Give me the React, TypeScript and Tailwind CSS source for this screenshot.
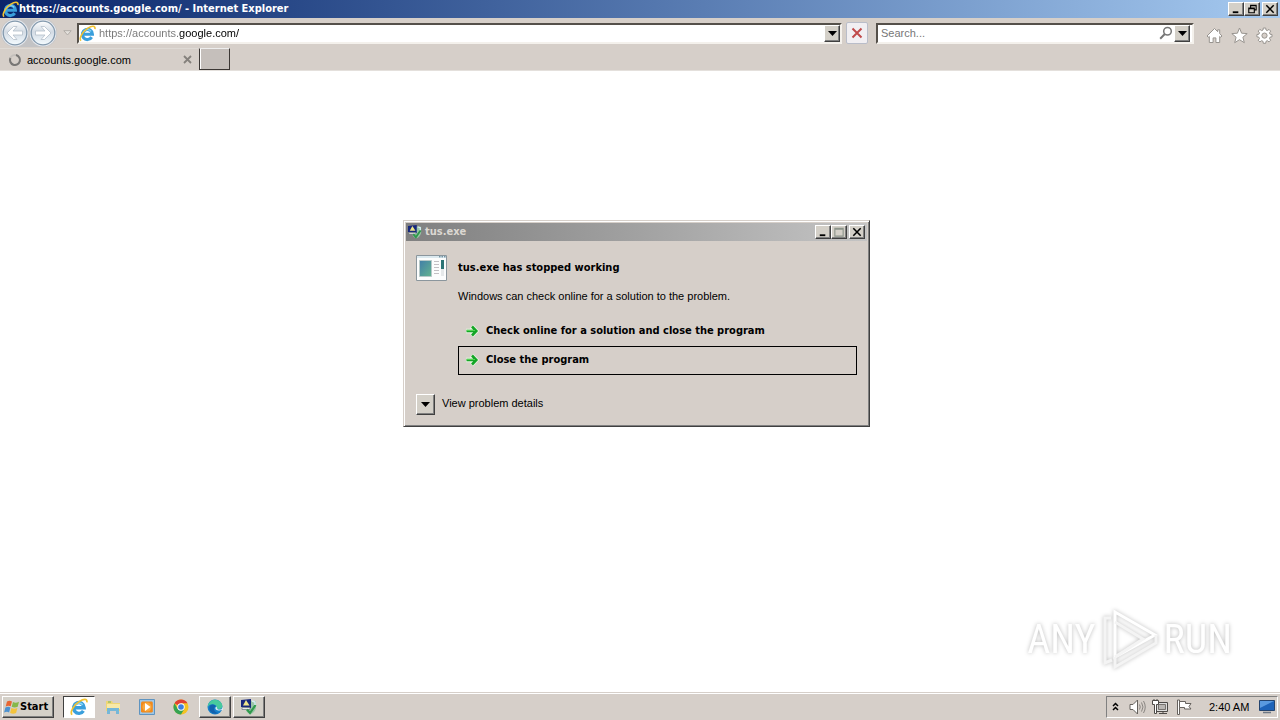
import React from 'react';
import clsx from 'clsx';

const raised = 'border border-t-white border-l-white border-r-[#404040] border-b-[#404040] bg-[#d4d0c8] shadow-[inset_-1px_-1px_0_#808080]';
const sunken = 'border-2 border-t-[#55504a] border-l-[#55504a] border-r-[#f4f1ec] border-b-[#f4f1ec] bg-white';

const IeLogo = ({ className }: { className: string }) => (
  <svg viewBox="0 0 16 16" className={className} aria-hidden="true">
    <path d="M3.6 8.7H12.6A4.7 4.8 0 1 0 11.9 11.4" fill="none" stroke="#3a9fdc" strokeWidth="3" />
    <path d="M4.3 6.600A4.2 4 0 0 1 11.4 6" fill="none" stroke="#8ad6f6" strokeWidth="1.2" />
    <path d="M1.8 14.9C-.3 12.5 3.3 6.2 8.4 3C12 .6 15.5.3 15 3.8" fill="none" stroke="#f2c230" strokeWidth="1.5" />
  </svg>
);

const ProgramIcon = ({ className }: { className: string }) => (
  <svg viewBox="0 0 16 16" className={className} aria-hidden="true">
    <path d="M9 2h6v7c-1 4-4 6-6 6-3-1-4-3-4-5l4-1z" fill="#9bc4a8" />
    <path d="M0 1 10 0v9L0 8z" fill="#16277c" />
    <path d="M2 6.500 5 1l3.500 5.500z" fill="#efe58a" />
    <path d="M1 8.500h8v2H1z" fill="#e9e9e9" stroke="#56636b" strokeWidth=".6" />
    <path d="m6 10.500 3 3.500 5.500-8" fill="none" stroke="#2f9a4c" strokeWidth="2.200" />
    <path d="m11 2 3 1v3" fill="none" stroke="#d7edf5" strokeWidth="1.400" />
  </svg>
);

const DownArrow = () => (
  <svg viewBox="0 0 9 5" className="h-[5px] w-[9px]" aria-hidden="true">
    <path d="M0 0h9L4.5 5z" fill="#000" />
  </svg>
);

const captionPaths = {
  Minimize: <path d="M3 9h6v2H3z" fill="#000" />,
  Restore: <path d="M5 2.5h6v5H9M5 3h6M5 2v3M3 5.5h6v5H3zM3 6.2h6" fill="none" stroke="#000" strokeWidth="1.2" />,
  Maximize: <path d="M2 2.500h9v8.500H2zM2 3.500h9" fill="none" stroke="#8c948a" strokeWidth="1.200" />,
  Close: <path d="m2.500 2.500 8 8m0-8-8 8" fill="none" stroke="#000" strokeWidth="1.7" />,
};

const CaptionButton = ({ kind }: { kind: keyof typeof captionPaths }) => (
  <button aria-label={kind} className={clsx(raised, 'flex h-[14px] w-4 items-center justify-center', kind === 'Close' && 'ml-0.5')}>
    <svg viewBox="0 0 13 13" className="size-3">{captionPaths[kind]}</svg>
  </button>
);

const NavButton = ({ label, flip }: { label: string; flip?: boolean }) => (
  <button aria-label={label} className="size-7">
    <svg viewBox="0 0 28 28" className={clsx('size-7', flip && '-scale-x-100')}>
      <defs>
        <linearGradient id={label} x1="0" y1="0" x2="0" y2="1">
          <stop offset="0" stopColor="#fff" />
          <stop offset=".45" stopColor="#d3dbe4" />
          <stop offset="1" stopColor="#f4fbff" />
        </linearGradient>
      </defs>
      <circle cx="14" cy="14" r="13.4" fill="#e6e9ee" />
      <circle cx="14" cy="14" r="11.8" fill={`url(#${label})`} stroke="#8399ad" strokeWidth="1.3" />
      <path d="M6 14l6.500-6.500h3.500l-4 4.500h9.500v4H12l4 4.500h-3.500z" fill="#fff" stroke="#b4bfca" strokeWidth=".8" />
    </svg>
  </button>
);

function Browser() {
  return (
    <>
      <header className="flex h-[18px] items-center bg-linear-to-r from-[#0a246a] to-[#a6caf0] px-0.5">
        <IeLogo className="size-[17px]" />
        <h1 className="grow font-['DejaVu_Sans_Condensed',sans-serif] font-bold text-white">https://accounts.google.com/ - Internet Explorer</h1>
        <CaptionButton kind="Minimize" />
        <CaptionButton kind="Restore" />
        <CaptionButton kind="Close" />
      </header>

      <nav className="flex h-[30px] items-center pr-[7px] pl-px">
        <div className="flex rounded-full bg-[#c3c3c5]">
          <NavButton label="Back" />
          <NavButton label="Forward" flip />
        </div>
        <button aria-label="Recent pages" className="flex w-5 justify-center">
          <svg viewBox="0 0 9 6" className="h-1.5 w-[9px]"><path d="M.8.7h7.400L4.500 5z" fill="#e4e1dc" stroke="#b1ada8" /></svg>
        </button>
        <div className={clsx(sunken, 'flex h-[21px] grow items-center')}>
          <IeLogo className="size-[17px]" />
          <input
            aria-label="Address"
            defaultValue="https://accounts.google.com/"
            className="ml-[3px] min-w-0 grow bg-linear-to-r from-[#777] from-[80px] via-[#000] via-[80px] to-[#000] bg-clip-text text-transparent outline-none"
          />
          <button aria-label="Show address list" className={clsx(raised, 'flex h-[17px] w-4 items-center justify-center')}><DownArrow /></button>
        </div>
        <button aria-label="Stop" className="mx-1 flex size-[22px] items-center justify-center rounded-xs border border-[#b9bdc9] bg-[#f1eff2]">
          <svg viewBox="0 0 12 12" className="size-3"><path d="m1.500 1.500 9 9m0-9-9 9" stroke="#c04a4a" strokeWidth="2" /></svg>
        </button>
        <div className={clsx(sunken, 'ml-1 flex h-[21px] w-[318px] items-center pr-0.5')}>
          <input aria-label="Search" placeholder="Search..." className="ml-[3px] min-w-0 grow outline-none placeholder:text-[#777]" />
          <button aria-label="Search" className="mr-px">
            <svg viewBox="0 0 14 14" className="size-3.5"><circle cx="8.5" cy="5.3" r="3.800" fill="none" stroke="#777" strokeWidth="1.500" /><path d="m5.800 8-4.600 4.700" stroke="#777" strokeWidth="2" /></svg>
          </button>
          <button aria-label="Search options" className={clsx(raised, 'flex h-[17px] w-4 items-center justify-center')}><DownArrow /></button>
        </div>
        <div className="ml-3 flex items-center gap-2 pt-1">
          <button aria-label="Home">
            <svg viewBox="0 0 17 17" className="size-[17px]"><path d="M8.500 1.500 1 9l1.300 1.300 1-.9v6.100h3.800v-4.600h2.800v4.600h3.800V9.400l1 .9L16 9l-2.300-2.400V2.800h-2v1.900z" fill="#fff" stroke="#98948f" /></svg>
          </button>
          <button aria-label="Favorites">
            <svg viewBox="0 0 17 17" className="size-[17px]"><path d="m8.500 1 2.100 5.200 5.600.4-4.300 3.600 1.400 5.500-4.800-3-4.800 3 1.400-5.500L.8 6.600l5.600-.4z" fill="#fff" stroke="#98948f" /></svg>
          </button>
          <button aria-label="Tools">
            <svg viewBox="0 0 17 17" className="size-[17px]">
              <path d="m7.300 1h2.400l.3 2 1.300.6 1.700-1.200 1.700 1.700-1.200 1.700.5 1.400 2 .3v2.300l-2 .4-.5 1.300 1.200 1.700-1.700 1.700-1.700-1.200-1.300.6-.3 2H7.300l-.3-2-1.400-.6-1.700 1.200-1.700-1.700 1.300-1.700-.6-1.300-2-.4V7.500l2-.3.600-1.400-1.300-1.700 1.700-1.700 1.700 1.200L7 3z" fill="#fff" stroke="#98948f" />
              <circle cx="8.500" cy="8.600" r="2.600" fill="#d6cfc9" stroke="#98948f" />
            </svg>
          </button>
        </div>
      </nav>

      <div className="flex h-[23px] border-b border-[#e4e0dc]" role="tablist">
        <div role="tab" aria-selected="true" className="mr-px flex w-[198px] items-center border-t border-[#dedad5] pl-2">
          <svg viewBox="0 0 14 14" className="size-3.5" aria-hidden="true"><circle cx="7" cy="7" r="5" fill="none" stroke="#c4c0bc" strokeWidth="2" /><path d="M8 2.100A5 5 0 1 1 2.400 5" fill="none" stroke="#797775" strokeWidth="2" /></svg>
          <span className="ml-[5px] grow">accounts.google.com</span>
          <button aria-label="Close tab" className="mr-1.5"><svg viewBox="0 0 9 9" className="size-[9px]"><path d="m1 1 7 7m0-7L1 8" stroke="#85817c" strokeWidth="1.800" /></svg></button>
        </div>
        <button aria-label="New tab" className="w-[31px] border border-t-[#eee] border-r-[#3b3734] border-b-[#3b3734] border-l-[#3b3734] bg-[#c5bfbb] shadow-[inset_1px_0_0_#fff]" />
      </div>
    </>
  );
}

const GreenArrow = () => (
  <svg viewBox="0 0 16 16" className="size-4 shrink-0" aria-hidden="true">
    <path d="M2 8h10M7.500 3.500 12 8l-4.500 4.500" fill="none" stroke="#e9f5e2" strokeWidth="4.600" />
    <path d="M2.500 8h10M8 3.500 12.300 8 8 12.500" fill="none" stroke="#14a526" strokeWidth="2.600" />
    <path d="M3 7.500h8" stroke="#52d552" />
  </svg>
);

function CrashDialog() {
  return (
    <section
      role="dialog"
      aria-labelledby="dialog-title"
      className="absolute top-[220px] left-[403px] w-[467px] border border-t-[#d6cfc9] border-r-[#404040] border-b-[#404040] border-l-[#d6cfc9] bg-[#d6cfc9] p-0.5 pb-[11px] shadow-[inset_1px_1px_0_#fff,inset_-1px_-1px_0_#808080]"
    >
      <header className="flex h-[18px] items-center bg-linear-to-r from-[#808080] to-[#c4c4c4] px-0.5">
        <ProgramIcon className="size-3.5" />
        <h2 id="dialog-title" className="ml-[3px] grow font-['DejaVu_Sans_Condensed',sans-serif] font-bold text-[#dcd8d2]">tus.exe</h2>
        <CaptionButton kind="Minimize" />
        <CaptionButton kind="Maximize" />
        <CaptionButton kind="Close" />
      </header>

      <div className="px-2.5">
        <div className="flex pt-3.5">
          <svg viewBox="0 0 31 26" className="h-[26px] w-[31px] shrink-0" aria-hidden="true">
            <defs>
              <linearGradient id="pane" x1="0" y1="0" x2="1" y2="1"><stop stopColor="#417ea8" /><stop offset="1" stopColor="#63b48f" /></linearGradient>
            </defs>
            <path d="M.5.5h30v25H.5z" fill="#fcfdfd" stroke="#8b969d" />
            <path d="M1 1h29v2H1z" fill="#dbe9ef" />
            <path d="M23 1.800h1.500m1 0H27m1 0h1.500" stroke="#496f82" />
            <path d="M3.500 5.500h12v16h-12z" fill="url(#pane)" stroke="#b8c9c9" />
            <path d="M18 6.500h5m-5 3h5m-5 3h5m-5 3h5m-5 3h5" stroke="#c3c0c4" />
            <path d="M25 5h3v9h-3z" fill="#2c7475" /><path d="M25 14h3v7h-3z" fill="#e6e9ea" />
          </svg>
          <h3 className="ml-[11px] pt-1 font-['DejaVu_Sans_Condensed',sans-serif] leading-[18px] font-bold">tus.exe has stopped working</h3>
        </div>
        <div className="ml-[42px]">
          <p className="pt-[7px] pb-px leading-4">Windows can check online for a solution to the problem.</p>
          <div className="mt-3 font-['DejaVu_Sans_Condensed',sans-serif] font-bold">
            <button className="flex h-[29px] w-full items-center px-1.5 pb-px">
              <GreenArrow />
              <span className="ml-1.5 pb-px">Check online for a solution and close the program</span>
            </button>
            <button className="flex h-[29px] w-full items-center border border-black px-[5px] pb-px">
              <GreenArrow />
              <span className="ml-1.5 pb-px">Close the program</span>
            </button>
          </div>
        </div>
        <div className="mt-[19px] flex items-center">
          <button id="details" aria-label="View problem details" className={clsx(raised, 'flex h-[21px] w-[19px] items-center justify-center')}><DownArrow /></button>
          <label htmlFor="details" className="ml-[7px] pb-[3px]">View problem details</label>
        </div>
      </div>
    </section>
  );
}

function Watermark() {
  return (
    <div className="absolute right-12 bottom-[49px] flex items-center font-['Roboto_Condensed','Open_Sans_Condensed',sans-serif] text-[40px] leading-none font-normal text-white drop-shadow-[0_0_2px_#bbb]">
      <span>ANY</span>
      <svg viewBox="0 0 60 62" className="mx-1 h-[62px] w-[60px]" aria-hidden="true">
        <g fill="none" stroke="#fff" strokeWidth="3">
          <path d="M15 3v45l40-22z" />
          <path d="M11 9H5v45l7-3M15 48v10L56 34v-8M15 13l28 17-28 18" stroke="#f4f4f4" />
        </g>
      </svg>
      <span>RUN</span>
    </div>
  );
}

const taskIcons = {
  'File Explorer': (
    <>
      <path d="M1 2h6l1 2h7v8H1z" fill="#efd675" /><path d="M2 5h13v5H2z" fill="#f8e9a7" />
      <path d="M2 15V9h12v6h-3v-3H5v3z" fill="#75b7d8" /><path d="M3 3h3" stroke="#72b263" />
    </>
  ),
  'Media Player': (
    <>
      <path d="M.5.5h15v15H.5z" fill="#9fc6e5" stroke="#5f94c0" /><path d="M3 2.500h10l.8 1v9l-1 1H3l-1-1v-9z" fill="#f18a1d" /><circle cx="8" cy="8" r="4.600" fill="#f9a83d" /><path d="m6 4 5.500 4L6 12z" fill="#fff" />
    </>
  ),
  Chrome: (
    <>
      <circle cx="8" cy="8" r="7.500" fill="#f4c223" />
      <path d="M8 8 1.500 4.250A7.500 7.500 0 0 1 14.500 4.250H8z" fill="#df4034" />
      <path d="M1.500 4.250A7.500 7.500 0 0 0 8 15.500L11.250 9.900 8 8 4.750 9.900z" fill="#35a352" />
      <circle cx="8" cy="8" r="3.700" fill="#fff" /><circle cx="8" cy="8" r="2.800" fill="#3c7ee0" />
    </>
  ),
  Edge: (
    <>
      <circle cx="8" cy="8" r="7.500" fill="#1681cc" />
      <path d="M.7 8C1 1 9-1.500 13.500 3c3 3 2.200 7-1.500 7-2 0-2.700-1-2.300-2C9 5 3 4 .7 8z" fill="#48ca9d" />
      <path d="M9.500 7.500c-2 1-1.300 4 2 4 1.600 0 2.700-.4 3.500-.8l1 1v-4c-1 3-4 3.300-5.500 2.200z" fill="#d9ecf0" />
      <path d="M3 6.500c3-2 5-.6 5.800.7-3 1.600-2.300 5.600 2.700 6.800-6 2.500-11-2-8.500-7.500z" fill="#1261ad" />
    </>
  ),
};

const TaskIcon = ({ name }: { name: keyof typeof taskIcons }) => (
  <svg viewBox="0 0 16 16" className="size-4">{taskIcons[name]}</svg>
);

function Taskbar() {
  return (
    <footer className="flex h-7 items-center border-t border-[#d6cfc9] px-0.5 shadow-[inset_0_1px_0_#fff]">
      <button className={clsx(raised, "flex h-[22px] w-[52px] items-center pl-px font-['DejaVu_Sans_Condensed',sans-serif] font-bold")}>
        <svg viewBox="0 0 16 16" className="size-4 shrink-0" aria-hidden="true">
          <path d="M3 2.500c2-1.200 3.500-.8 5 0L6.700 7.300c-1.600-.9-3-.9-5 .1z" fill="#e86632" />
          <path d="M9 3c2 1 3.700.8 6-.3l-1.300 5c-2 1-4 1-6 .1z" fill="#86b849" />
          <path d="M1.400 8.500c2-1 3.500-1 5-.1l-1.300 5c-1.500-.9-3-.9-5 .1z" fill="#4c91d0" />
          <path d="M7.400 9c2 .9 4 .9 6-.1l-1.300 5c-2 1.100-4 1-6 0z" fill="#f3c33c" />
        </svg>
        <span className="text-[11px]">Start</span>
      </button>
      <div className="ml-[9px] flex items-center gap-0.5">
        <button aria-label="Internet Explorer" className="flex h-[22px] w-8 items-center justify-center border border-t-[#404040] border-r-white border-b-white border-l-[#404040] bg-white"><IeLogo className="size-[18px]" /></button>
        <button aria-label="File Explorer" className="flex h-[22px] w-8 items-center justify-center"><TaskIcon name="File Explorer" /></button>
        <button aria-label="Media Player" className="flex h-[22px] w-8 items-center justify-center"><TaskIcon name="Media Player" /></button>
        <button aria-label="Chrome" className="flex h-[22px] w-8 items-center justify-center"><TaskIcon name="Chrome" /></button>
        <button aria-label="Edge" className={clsx(raised, 'flex h-[22px] w-8 items-center justify-center')}><TaskIcon name="Edge" /></button>
        <button aria-label="tus.exe" className={clsx(raised, 'flex h-[22px] w-8 items-center justify-center')}><ProgramIcon className="size-4" /></button>
      </div>
      <div className="ml-auto flex h-[22px] w-[172px] items-center border border-t-[#808080] border-r-white border-b-white border-l-[#808080] pr-0.5 pl-[5px]">
        <button aria-label="Show hidden icons"><svg viewBox="0 0 7 9" className="h-[9px] w-[7px]"><path d="m1 4 2.500-2.500L6 4M1 8l2.500-2.500L6 8" fill="none" stroke="#000" strokeWidth="1.500" /></svg></button>
        <button aria-label="Volume" className="ml-2.5">
          <svg viewBox="0 0 17 16" className="h-4 w-[17px]"><path d="M1 5.500h3L8.500 1v14L4 10.500H1z" fill="#fff" stroke="#66625e" /><path d="M10.500 5.500q1.500 2.500 0 5M12.500 3.500q3 4.500 0 9M14.500 2q3.500 6 0 12" fill="none" stroke="#8a8682" /></svg>
        </button>
        <button aria-label="Network" className="ml-1.5">
          <svg viewBox="0 0 16 16" className="size-4"><path d="M4.500 3.500h11v9h-11z" fill="#ddd" stroke="#4d4a47" /><path d="M6.500 5.500h7v5h-7z" fill="#b9b6b3" stroke="#77736f" /><path d="M7 14.500h8M11 12.500v2" stroke="#4d4a47" /><path d="M.5 1.500h6v4h-2v9h-2v-9h-2zM2 0v1.500M5 0v1.500" fill="#fff" stroke="#4d4a47" /></svg>
        </button>
        <button aria-label="Action Center" className="ml-2">
          <svg viewBox="0 0 16 16" className="size-4"><path d="M1.500 1v14.500h2V1z" fill="#fff" stroke="#66625e" /><path d="M3.500 2.500h6v2h5.500l-2 3 2 2.500H8.500V8.500h-5z" fill="#fff" stroke="#66625e" /></svg>
        </button>
        <time className="ml-[17px]">2:40 AM</time>
        <button aria-label="Show desktop" className="ml-auto">
          <svg viewBox="0 0 16 14" className="h-3.5 w-4"><path d="M.5.500h15v10H.5z" fill="#1e63b9" stroke="#24446f" /><path d="M1 1h14L1 8z" fill="#5a9ae0" /><path d="M4 12.500h8" stroke="#6d7784" strokeWidth="1.500" /></svg>
        </button>
      </div>
    </footer>
  );
}

export default function App() {
  return (
    <div className="relative flex min-h-screen flex-col bg-[#d6cfc9] font-['Liberation_Sans',Arial,sans-serif] text-[11px] leading-[14px] text-black">
      <Browser />
      <main className="grow bg-white" />
      <Taskbar />
      <CrashDialog />
      <Watermark />
    </div>
  );
}
